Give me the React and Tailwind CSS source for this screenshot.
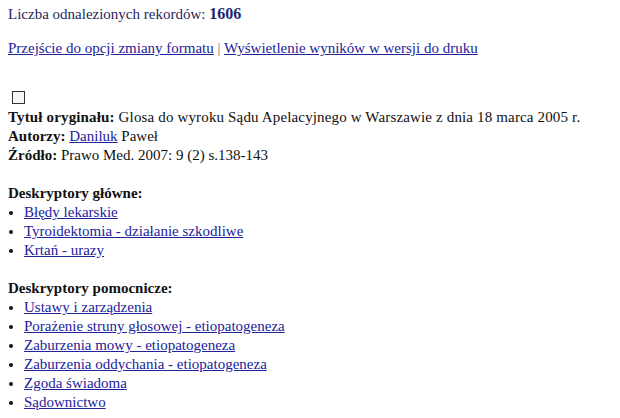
export default function App() {
  const glowne = ['Błędy lekarskie', 'Tyroidektomia - działanie szkodliwe', 'Krtań - urazy']
  const pomocnicze = [
    'Ustawy i zarządzenia',
    'Porażenie struny głosowej - etiopatogeneza',
    'Zaburzenia mowy - etiopatogeneza',
    'Zaburzenia oddychania - etiopatogeneza',
    'Zgoda świadoma',
    'Sądownictwo',
  ]

  return (
    <div className="min-h-screen bg-white pl-[8px] pt-[4px] text-[15px] leading-[19px] text-[#111] font-['Liberation_Serif',serif]">
      {/* record count */}
      <div className="text-[#1f1f5c]">
        Liczba odnalezionych rekordów: <b className="text-[#1c2670] text-[16px]">1606</b>
      </div>

      {/* format links */}
      <div className="mt-[15px]">
        <a href="#" className="text-[#22229a] underline">Przejście do opcji zmiany formatu</a>
        <span className="text-[#777]"> | </span>
        <a href="#" className="text-[#22229a] underline">Wyświetlenie wyników w wersji do druku</a>
      </div>

      {/* record */}
      <div className="mt-[33px] ml-[4px] w-[13px] h-[13px] border border-[#333] bg-[#f3f5f9]"></div>
      <div className="mt-[4px]">
        <div className="tracking-[0.15px]"><b>Tytuł oryginału:</b> Glosa do wyroku Sądu Apelacyjnego w Warszawie z dnia 18 marca 2005 r.</div>
        <div><b>Autorzy:</b> <a href="#" className="text-[#22229a] underline">Daniluk</a> Paweł</div>
        <div><b>Źródło:</b> Prawo Med. 2007: 9 (2) s.138-143</div>
      </div>

      <div className="mt-[19px]">
        <b>Deskryptory główne:</b>
        <ul className="list-disc pl-[16px]">
          {glowne.map((d) => (
            <li key={d}><a href="#" className="text-[#22229a] underline">{d}</a></li>
          ))}
        </ul>
      </div>

      <div className="mt-[19px]">
        <b>Deskryptory pomocnicze:</b>
        <ul className="list-disc pl-[16px]">
          {pomocnicze.map((d) => (
            <li key={d}><a href="#" className="text-[#22229a] underline">{d}</a></li>
          ))}
        </ul>
      </div>
    </div>
  )
}
